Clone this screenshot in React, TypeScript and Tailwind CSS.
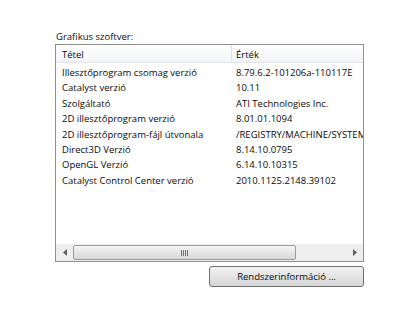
const rows: [string, string][] = [
  ['Illesztőprogram csomag verzió', '8.79.6.2-101206a-110117E'],
  ['Catalyst verzió', '10.11'],
  ['Szolgáltató', 'ATI Technologies Inc.'],
  ['2D illesztőprogram verzió', '8.01.01.1094'],
  ['2D illesztőprogram-fájl útvonala', '/REGISTRY/MACHINE/SYSTEM'],
  ['Direct3D Verzió', '8.14.10.0795'],
  ['OpenGL Verzió', '6.14.10.10315'],
  ['Catalyst Control Center verzió', '2010.1125.2148.39102'],
]

export default function App() {
  return (
    <div
      className="w-[400px] h-[333px] bg-white pl-[55px] pt-[31px] text-[9.5px] text-[#0a0a0a]"
      style={{ fontFamily: '"Open Sans", "Noto Sans", sans-serif' }}
    >
      <div className="leading-[12px] h-[13px] pl-px">Grafikus szoftver:</div>
      <div className="w-[309px] h-[218px] border border-[#8e8f8f] flex flex-col overflow-hidden">
        {/* header */}
        <div className="flex h-[18px] bg-gradient-to-b from-white to-[#f3f4f6] border-b border-[#e3e5e8] leading-[19px]">
          <div className="w-[176px] pl-[6px] border-r border-[#e0e2e5]">Tétel</div>
          <div className="flex-1 pl-[4px]">Érték</div>
        </div>
        <div className="flex-1 overflow-hidden pt-[2px]">
          {rows.map(([k, v]) => (
            <div key={k} className="flex h-[15.4px] leading-[15px] whitespace-nowrap overflow-hidden">
              <div className="w-[176px] pl-[6px] shrink-0">{k}</div>
              <div className="pl-[4px] min-w-0 overflow-hidden">{v}</div>
            </div>
          ))}
        </div>
        {/* horizontal scrollbar */}
        <div className="h-[17px] bg-[#eeeeee] flex items-center">
          <div className="w-[17px] flex justify-center">
            <svg width="4" height="7" viewBox="0 0 4 7"><path d="M4 0 L0 3.5 L4 7 Z" fill="#606060" /></svg>
          </div>
          <div className="w-[223px] h-[15px] rounded-[2px] border border-[#9a9a9a] bg-gradient-to-b from-[#f4f4f4] to-[#d8d8d8] flex items-center justify-center">
            <div className="flex gap-[1px]">
              <div className="w-px h-[6px] bg-[#6f6f6f]" />
              <div className="w-px h-[6px] bg-[#6f6f6f]" />
              <div className="w-px h-[6px] bg-[#6f6f6f]" />
              <div className="w-px h-[6px] bg-[#6f6f6f]" />
            </div>
          </div>
          <div className="flex-1" />
          <div className="w-[17px] flex justify-center">
            <svg width="4" height="7" viewBox="0 0 4 7"><path d="M0 0 L4 3.5 L0 7 Z" fill="#606060" /></svg>
          </div>
        </div>
      </div>
      <div className="flex justify-end w-[309px] mt-[4px]">
        <button className="w-[155px] h-[21px] border border-[#707070] rounded-[3px] bg-gradient-to-b from-[#f2f2f2] to-[#d5d5d5] text-[9.5px] leading-[19px] text-[#0a0a0a]">
          Rendszerinformáció ...
        </button>
      </div>
    </div>
  )
}
